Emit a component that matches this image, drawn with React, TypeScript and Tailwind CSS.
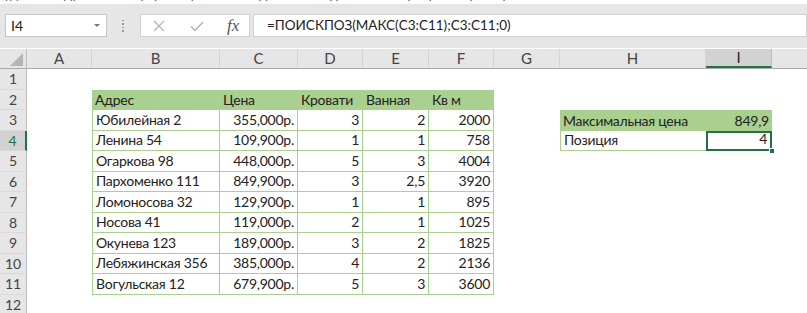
import React from "react";

const cols = ["A", "B", "C", "D", "E", "F", "G", "H", "I"];
const widths = [65, 128, 78, 65, 66, 65, 66, 146, 66];

const rows: [string, string, string, string, string][] = [
  ["Юбилейная 2", "355,000р.", "3", "2", "2000"],
  ["Ленина 54", "109,900р.", "1", "1", "758"],
  ["Огаркова 98", "448,000р.", "5", "3", "4004"],
  ["Пархоменко 111", "849,900р.", "3", "2,5", "3920"],
  ["Ломоносова 32", "129,900р.", "1", "1", "895"],
  ["Носова 41", "119,000р.", "2", "1", "1025"],
  ["Окунева 123", "189,000р.", "3", "2", "1825"],
  ["Лебяжинская 356", "385,000р.", "4", "2", "2136"],
  ["Вогульская 12", "679,900р.", "5", "3", "3600"],
];

const font = { fontFamily: "Lato, 'Noto Sans', sans-serif" };

function Cell({
  children,
  className = "",
  right = false,
}: {
  children?: React.ReactNode;
  className?: string;
  right?: boolean;
}) {
  return (
    <div
      className={`flex items-end overflow-visible whitespace-nowrap px-[3px] pb-[1px] text-[14px] leading-[18px] tracking-[-0.25px] text-[#222] ${
        right ? "justify-end" : ""
      } ${className}`}
    >
      {children}
    </div>
  );
}

function SheetRow({ n, children }: { n: number; children?: React.ReactNode }) {
  const selected = n === 4;
  return (
    <div className="flex h-[20.5px]">
      <div
        className={`flex w-[27px] shrink-0 items-center justify-center border-b border-[#d9d9d9] text-[14px] ${
          selected
            ? "border-r-2 border-r-[#217346] bg-[#d2d2d2] text-[#217346]"
            : "border-r border-r-[#bdbdbd] bg-[#e6e6e6] text-[#444]"
        }`}
      >
        {n}
      </div>
      {children}
    </div>
  );
}

const g = "border-[#a9d08e]";

export default function App() {
  return (
    <div className="h-[313px] w-[807px] overflow-hidden bg-white" style={font}>
      {/* ribbon strip, mostly scrolled out of view */}
      <div className="h-[4px] overflow-hidden bg-white">
        <div className="-mt-[14px] pl-[4px] text-[13px] leading-[16px] text-[#555]">
          удаление дубликатов форматирование выделенного фрагмента сортировка фильтр
        </div>
      </div>

      {/* formula bar */}
      <div className="flex h-[44px] items-center bg-[#e6e6e6] pb-[1px]">
        <div className="ml-[5px] flex h-[23px] w-[102px] items-center justify-between border border-[#c6c6c6] bg-white pl-[5px] pr-[6px]">
          <span className="text-[14px] text-[#222]">I4</span>
          <span className="h-0 w-0 border-x-[3px] border-t-[3px] border-x-transparent border-t-[#777]" />
        </div>
        <div className="ml-[15px] flex w-[3px] flex-col gap-[2px]">
          {[0, 1, 2, 3].map((i) => (
            <span key={i} className="h-[1.5px] w-[1.5px] bg-[#999]" />
          ))}
        </div>
        <div className="ml-[15px] flex h-[23px] w-[110px] items-center border border-[#d0d0d0] bg-white">
          <svg width="14" height="14" viewBox="0 0 14 14" className="ml-[11px]">
            <path d="M2 2 L12 12 M12 2 L2 12" stroke="#b3b3b3" strokeWidth="1.2" fill="none" />
          </svg>
          <svg width="16" height="14" viewBox="0 0 16 14" className="ml-[23px]">
            <path d="M2 7.5 L6 11.5 L14 3" stroke="#b3b3b3" strokeWidth="1.4" fill="none" />
          </svg>
          <span
            className="ml-[22px] text-[17px] italic text-[#555]"
            style={{ fontFamily: "'Liberation Serif', serif" }}
          >
            fx
          </span>
        </div>
        <div className="ml-[3px] flex h-[23px] flex-1 items-center border border-[#d0d0d0] bg-white pl-[13px] text-[13.5px] text-[#222]">
          =ПОИСКПОЗ(МАКС(C3:C11);C3:C11;0)
        </div>
      </div>

      {/* column headers */}
      <div className="mt-[1px] flex h-[20px] border-b border-[#ababab] bg-[#e6e6e6]">
        <div className="relative w-[27px] shrink-0 border-r border-[#bdbdbd]">
          <span className="absolute bottom-[2px] right-[3px] h-0 w-0 border-b-[13px] border-l-[13px] border-b-[#b4b4b4] border-l-transparent" />
        </div>
        {cols.map((c, i) => (
          <div
            key={c}
            style={{ width: widths[i] }}
            className={`flex shrink-0 items-center justify-center text-[15px] ${
              c === "I"
                ? "border-b-2 border-r border-b-[#217346] border-r-[#bdbdbd] bg-[#d2d2d2] text-[#222]"
                : "border-r border-[#d4d4d4] text-[#444]"
            }`}
          >
            {c}
          </div>
        ))}
        <div className="flex-1" />
      </div>

      {/* sheet body */}
      <SheetRow n={1} />
      <SheetRow n={2}>
        <div className="w-[65px] shrink-0" />
        <div className="flex h-full w-[402px] shrink-0 bg-[#a9d08e]">
          <Cell className="w-[128px]">Адрес</Cell>
          <Cell className="w-[78px]">Цена</Cell>
          <Cell className="w-[65px]">Кровати</Cell>
          <Cell className="w-[66px]">Ванная</Cell>
          <Cell className="w-[65px]">Кв м</Cell>
        </div>
      </SheetRow>
      {rows.map((r, i) => {
        const n = i + 3;
        return (
          <SheetRow key={n} n={n}>
            <div className="w-[65px] shrink-0" />
            <Cell className={`w-[128px] shrink-0 border-b border-l border-r ${g}`}>{r[0]}</Cell>
            <Cell right className={`w-[78px] shrink-0 border-b border-r ${g}`}>
              {r[1]}
            </Cell>
            <Cell right className={`w-[65px] shrink-0 border-b border-r ${g}`}>
              {r[2]}
            </Cell>
            <Cell right className={`w-[66px] shrink-0 border-b border-r ${g}`}>
              {r[3]}
            </Cell>
            <Cell right className={`w-[65px] shrink-0 border-b border-r ${g}`}>
              {r[4]}
            </Cell>
            <div className="w-[66px] shrink-0" />
            {n === 3 && (
              <div className="flex h-full w-[212px] shrink-0 bg-[#a9d08e]">
                <Cell className="w-[146px]">Максимальная цена</Cell>
                <Cell right className="w-[66px]">
                  849,9
                </Cell>
              </div>
            )}
            {n === 4 && (
              <>
                <Cell className={`w-[146px] shrink-0 border-b border-l ${g}`}>Позиция</Cell>
                <div className="relative w-[66px] shrink-0">
                  <Cell right className="h-full border-2 border-[#217346]">
                    4
                  </Cell>
                  <span className="absolute -bottom-[3px] -right-[3px] h-[6px] w-[6px] border border-white bg-[#217346]" />
                </div>
              </>
            )}
          </SheetRow>
        );
      })}
      <SheetRow n={12} />
    </div>
  );
}
